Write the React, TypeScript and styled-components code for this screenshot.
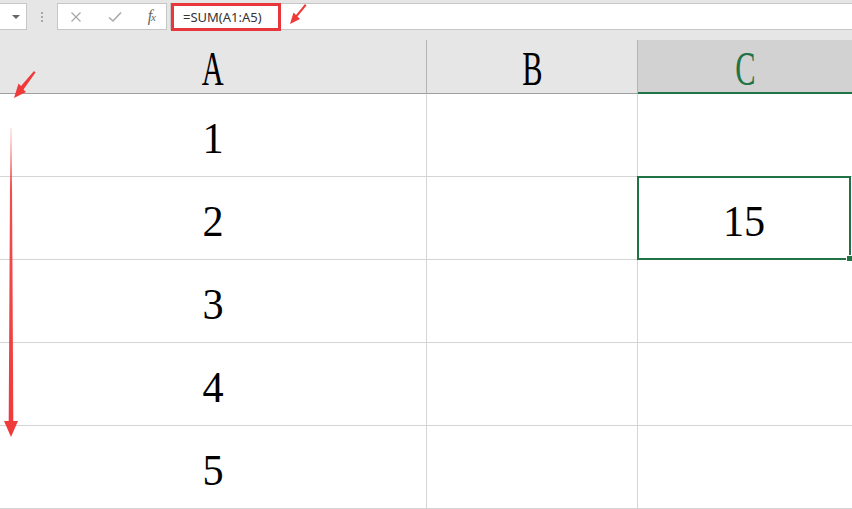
import React from "react";
import styled, { createGlobalStyle } from "styled-components";

const Global = createGlobalStyle`
  html, body { margin: 0; padding: 0; background: #ffffff; overflow: hidden; }
  #root { width: 852px; height: 509px; }
`;

const Page = styled.div`
  width: 852px;
  height: 509px;
  display: flex;
  flex-direction: column;
  background: #ffffff;
  overflow: hidden;
  position: relative;
  font-family: "Liberation Sans", Arial, sans-serif;
`;

const Toolbar = styled.div`
  height: 40px;
  flex: none;
  background: #e6e6e6;
  display: flex;
  align-items: flex-start;
  padding-top: 3px;
  box-sizing: border-box;
`;

const Box = styled.div<{ $w?: number }>`
  height: 27px;
  box-sizing: border-box;
  background: #ffffff;
  border: 1px solid #c6c6c6;
  display: flex;
  align-items: center;
  ${(p) => (p.$w ? `width: ${p.$w}px; flex: none;` : "flex: 1;")}
`;

const NameBox = styled(Box)`
  border-left: none;
  justify-content: flex-end;
  padding-right: 6px;
`;

const Caret = styled.div`
  width: 0;
  height: 0;
  border-left: 4px solid transparent;
  border-right: 4px solid transparent;
  border-top: 4px solid #666666;
`;

const Grip = styled.div`
  width: 30px;
  flex: none;
  height: 27px;
  display: flex;
  flex-direction: column;
  align-items: center;
  justify-content: center;
  gap: 2px;
`;

const Dot = styled.span`
  width: 2px;
  height: 2px;
  background: #a8a8a8;
`;

const FuncBox = styled(Box)`
  justify-content: space-between;
  padding: 0 11px 0 12px;
  margin-right: 3px;
`;

const FxText = styled.span`
  font-family: "Liberation Serif", "Times New Roman", serif;
  font-style: italic;
  font-size: 16px;
  color: #666666;
  letter-spacing: -1px;
  margin-top: -2px;
  & sub {
    font-size: 11px;
    vertical-align: baseline;
  }
`;

const FormulaBar = styled(Box)`
  border-right: none;
  overflow: visible;
`;

const Highlight = styled.div`
  height: 28px;
  margin-top: -1px;
  width: 110px;
  box-sizing: border-box;
  border: 3px solid #e8373a;
  display: flex;
  align-items: center;
  padding-left: 9px;
  font-family: "Microsoft YaHei", "Noto Sans", "Liberation Sans", sans-serif;
  font-size: 13px;
  color: #333333;
  align-self: flex-start;
`;

const TopArrow = styled.svg`
  margin-left: 7px;
  margin-top: -1px;
  flex: none;
  align-self: flex-start;
`;

const Sheet = styled.div`
  flex: 1;
  display: grid;
  grid-template-columns: 427px 211px 214px;
  grid-template-rows: 54px repeat(5, 83px);
  position: relative;
`;

const Head = styled.div<{ $sel?: boolean; $last?: boolean }>`
  background: ${(p) => (p.$sel ? "#d2d2d2" : "#e6e6e6")};
  border-right: ${(p) => (p.$last ? "none" : "1px solid #b4b4b4")};
  border-bottom: ${(p) => (p.$sel ? "2px solid #217346" : "1px solid #9e9e9e")};
  box-sizing: border-box;
  display: flex;
  align-items: center;
  justify-content: center;
  padding-top: ${(p) => (p.$sel ? "4px" : "3px")};
  color: ${(p) => (p.$sel ? "#217346" : "#000000")};
`;

const HeadLabel = styled.span`
  font-family: "Liberation Serif", "Times New Roman", serif;
  font-size: 49px;
  line-height: 1;
  display: inline-block;
  transform: scaleX(0.62);
`;

const Cell = styled.div<{ $sel?: boolean; $last?: boolean }>`
  box-sizing: border-box;
  border-right: ${(p) => (p.$last ? "none" : "1px solid #d4d4d4")};
  border-bottom: 1px solid #d4d4d4;
  display: flex;
  align-items: center;
  justify-content: center;
  position: relative;
  ${(p) =>
    p.$sel
      ? `
    border: 2px solid #217346;
    margin: -1px 1px 0 -1px;
    `
      : ""}
`;

const Num = styled.span`
  font-family: "Liberation Serif", "Times New Roman", serif;
  font-size: 44px;
  line-height: 1;
  color: #000000;
  display: inline-block;
  transform: scaleX(0.96);
  padding-top: 8px;
`;

const Handle = styled.span`
  position: absolute;
  right: -4px;
  bottom: -4px;
  width: 5px;
  height: 5px;
  background: #217346;
  border: 1px solid #ffffff;
`;

const Overlay = styled.svg`
  position: absolute;
  left: 0;
  top: 0;
  pointer-events: none;
`;

const columns = ["A", "B", "C"];
const values = [1, 2, 3, 4, 5];

export default function App() {
  return (
    <Page>
      <Global />
      <Toolbar>
        <NameBox $w={27}>
          <Caret />
        </NameBox>
        <Grip>
          <Dot />
          <Dot />
          <Dot />
        </Grip>
        <FuncBox $w={110}>
          <svg width="12" height="12" viewBox="0 0 12 12">
            <path d="M1.5 1.5 L10.5 10.5 M10.5 1.5 L1.5 10.5" stroke="#a9a9a9" strokeWidth="1.3" fill="none" />
          </svg>
          <svg width="14" height="12" viewBox="0 0 14 12">
            <path d="M1 6.5 L5 10 L13 1.5" stroke="#a9a9a9" strokeWidth="1.6" fill="none" />
          </svg>
          <FxText>
            f<sub>x</sub>
          </FxText>
        </FuncBox>
        <FormulaBar>
          <Highlight>=SUM(A1:A5)</Highlight>
          <TopArrow width="20" height="22" viewBox="0 0 20 22">
            <path d="M17 1 L8 12 L5.5 9.5 L2 21 L12 16 L9.5 13.5 L18.5 2.5 Z" fill="#f03a3a" />
          </TopArrow>
        </FormulaBar>
      </Toolbar>
      <Sheet>
        {columns.map((c, i) => (
          <Head key={c} $sel={c === "C"} $last={i === 2}>
            <HeadLabel>{c}</HeadLabel>
          </Head>
        ))}
        {values.map((v, r) =>
          columns.map((c, i) => {
            const sel = c === "C" && r === 1;
            return (
              <Cell key={`${c}${r}`} $sel={sel} $last={i === 2}>
                {c === "A" && <Num>{v}</Num>}
                {sel && (
                  <>
                    <Num>15</Num>
                    <Handle />
                  </>
                )}
              </Cell>
            );
          })
        )}
        <Overlay width="40" height="469" viewBox="0 0 40 469">
          <defs>
            <linearGradient id="fade" x1="0" y1="0" x2="0" y2="1">
              <stop offset="0" stopColor="#f03a3a" stopOpacity="0.15" />
              <stop offset="0.2" stopColor="#f03a3a" stopOpacity="0.9" />
              <stop offset="1" stopColor="#f03a3a" stopOpacity="1" />
            </linearGradient>
          </defs>
          <path d="M34 31 L21 46 L18.5 43.5 L14 58 L26 52 L23.5 49.5 L35.5 32.5 Z" fill="#f03a3a" />
          <path d="M10.3 88 L11.7 88 L13.3 381 L18 381 L11 397 L4 381 L8.7 381 Z" fill="url(#fade)" />
        </Overlay>
      </Sheet>
    </Page>
  );
}
